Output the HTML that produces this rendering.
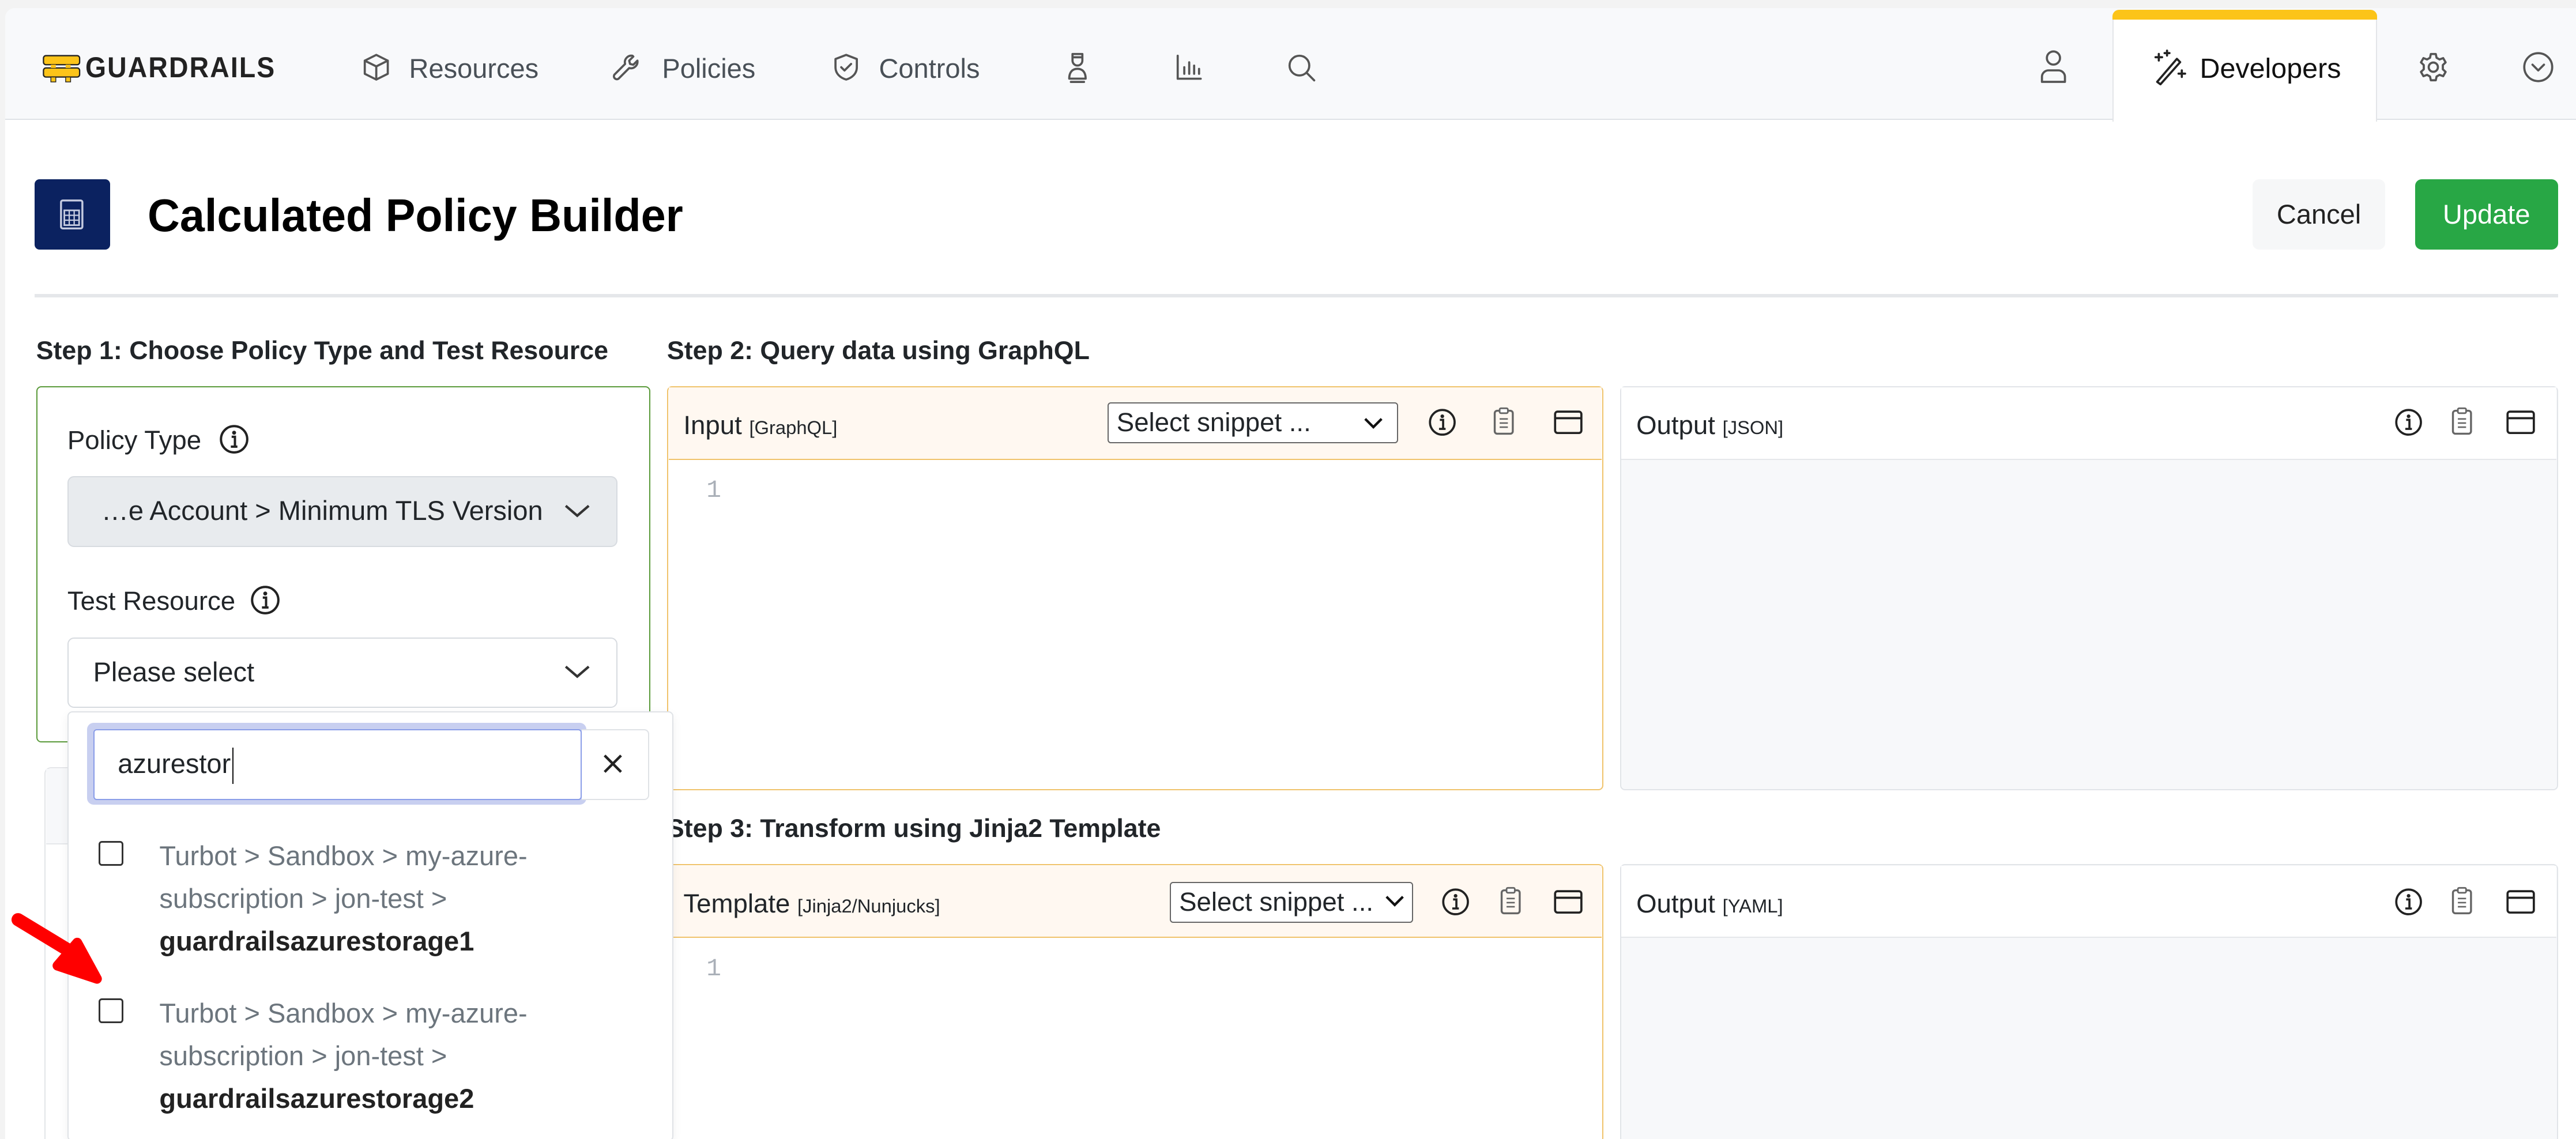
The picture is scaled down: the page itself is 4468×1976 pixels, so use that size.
<!DOCTYPE html>
<html><head><meta charset="utf-8"><style>
*{box-sizing:border-box;margin:0;padding:0}
html,body{width:4468px;height:1976px;overflow:hidden;background:#f3f3f3}
#r{zoom:2.8495;position:relative;width:1568px;height:694px;font-family:"Liberation Sans",sans-serif;color:#212529}
.a{position:absolute}
.page{left:3px;top:5px;width:1565px;height:690px;background:#fff;border-top-left-radius:6px}
.nav{left:3px;top:5px;width:1565px;height:68px;background:#f8f9fb;border-bottom:1px solid #dfe2e6;border-top-left-radius:6px}
.ni{font-size:16.5px;color:#495057;top:32px}
.ic{stroke:#555;fill:none;stroke-width:1.3;stroke-linecap:round;stroke-linejoin:round}
.lbl{font-size:16px;color:#212529}
.sel{border:1px solid #d7dbe0;border-radius:4px;font-size:16.5px}
.ph{border:1px solid #f0c36b;}
.hd{font-size:16px}
.hd small{font-size:11.5px}
.grey{color:#6c757d}
</style></head><body><div id="r">
<div class="a page"></div>
<div class="a nav"></div>
<svg class="a" style="left:26px;top:31px" width="24" height="20" viewBox="0 0 24 20"><rect x="0.5" y="3" width="22" height="5.5" rx="1.5" fill="#fcc419" stroke="#222" stroke-width="0.8"/><rect x="0.5" y="10.5" width="22" height="5.5" rx="1.5" fill="#fcc419" stroke="#222" stroke-width="0.8"/><rect x="5" y="8.5" width="3" height="2" fill="#fcc419"/><rect x="14" y="8.5" width="3" height="2" fill="#fcc419"/><rect x="5" y="16" width="3" height="3" fill="#fcc419" stroke="#222" stroke-width="0.5"/><rect x="14" y="16" width="3" height="3" fill="#fcc419" stroke="#222" stroke-width="0.5"/></svg>
<div class="a" style="left:52px;top:31px;font-size:17.5px;font-weight:bold;letter-spacing:0.8px;color:#222;transform:scaleX(0.93);transform-origin:left">GUARDRAILS</div>
<svg class="a" style="left:220px;top:32px" width="18" height="18" viewBox="0 0 18 18"><path class="ic" d="M9 1.5 16 5v8l-7 3.5L2 13V5zM2 5l7 3.5L16 5M9 8.5v8"/></svg>
<div class="a ni" style="left:249px">Resources</div>
<svg class="a" style="left:372px;top:32px" width="18" height="18" viewBox="0 0 18 18"><path class="ic" d="M13 2a4 4 0 0 0-4.5 5L2 13.5a1.8 1.8 0 0 0 2.5 2.5L11 9.5A4 4 0 0 0 16 5l-2.5 2.5-2-.5-.5-2L13.5 2.5z"/></svg>
<div class="a ni" style="left:403px">Policies</div>
<svg class="a" style="left:506px;top:32px" width="18" height="18" viewBox="0 0 18 18"><path class="ic" d="M9 1.5 15.5 4v5c0 4-3 6.5-6.5 7.5C5.5 15.5 2.5 13 2.5 9V4zM6 9l2 2 4-4"/></svg>
<div class="a ni" style="left:535px">Controls</div>
<svg class="a" style="left:648px;top:31px" width="16" height="20" viewBox="0 0 16 20"><path class="ic" d="M5 2h6v4a3 3 0 0 1-6 0zM5 4h6M3 17c0-4 2-6 5-6s5 2 5 6zM4 19h8"/></svg>
<svg class="a" style="left:715px;top:32px" width="18" height="18" viewBox="0 0 18 18"><path class="ic" d="M2 2v14h14M6 13V9M9 13V6M12 13V8M15 13V10"/></svg>
<svg class="a" style="left:783px;top:32px" width="19" height="19" viewBox="0 0 19 19"><circle class="ic" cx="8" cy="8" r="6"/><path class="ic" d="M12.5 12.5 17 17"/></svg>
<svg class="a" style="left:1241px;top:30px" width="18" height="22" viewBox="0 0 18 22"><circle class="ic" cx="9" cy="5.5" r="4"/><path class="ic" d="M2 20v-3a4 4 0 0 1 4-4h6a4 4 0 0 1 4 4v3z"/></svg>
<div class="a" style="left:1286px;top:11px;width:161px;height:63px;background:#fff;border-left:1px solid #e3e5e8;border-right:1px solid #e3e5e8"></div>
<div class="a" style="left:1286px;top:6px;width:161px;height:6px;background:#fcc419;border-radius:4px 4px 0 0"></div>
<svg class="a" style="left:1310px;top:30px" width="22" height="22" viewBox="0 0 22 22"><path class="ic" style="stroke:#222" d="M3 20 15 6l2 2L5 21.5zM4 3v4M2 5h4M9 1v3M7.5 2.5h3M18 13v4M16 15h4"/></svg>
<div class="a" style="left:1339px;top:32px;font-size:17px;color:#111">Developers</div>
<svg class="a" style="left:1471px;top:31px" width="20" height="20" viewBox="0 0 20 20"><circle class="ic" cx="10" cy="10" r="2.8"/><path class="ic" d="M8.5 2h3l.5 2.3 1.8 1 2.2-.8 1.5 2.6-1.7 1.6v2.6l1.7 1.6-1.5 2.6-2.2-.8-1.8 1-.5 2.3h-3l-.5-2.3-1.8-1-2.2.8-1.5-2.6 1.7-1.6V8.7L2.5 7.1 4 4.5l2.2.8 1.8-1z"/></svg>
<svg class="a" style="left:1535px;top:31px" width="20" height="20" viewBox="0 0 20 20"><circle class="ic" cx="10" cy="10" r="8.5"/><path class="ic" d="M6.5 8.5 10 12l3.5-3.5"/></svg>
<div class="a" style="left:21px;top:109px;width:46px;height:43px;background:#0b2260;border-radius:3px"></div>
<svg class="a" style="left:36px;top:121px" width="15" height="19" viewBox="0 0 15 19"><rect x="1" y="1" width="13" height="17" rx="1" fill="none" stroke="#c5cbe0" stroke-width="1.2"/><rect x="3" y="7" width="9" height="9" fill="none" stroke="#c5cbe0" stroke-width="1"/><path d="M6 7v9M9 7v9M3 10h9M3 13h9" stroke="#c5cbe0" stroke-width="0.8"/></svg>
<div class="a" style="left:90px;top:115px;font-size:28px;font-weight:bold;color:#000;transform:scaleX(0.97);transform-origin:left">Calculated Policy Builder</div>
<div class="a" style="left:1371px;top:109px;width:81px;height:43px;background:#f6f7f8;border-radius:4px;font-size:16.5px;text-align:center;line-height:43px;color:#222">Cancel</div>
<div class="a" style="left:1470px;top:109px;width:87px;height:43px;background:#28a745;border-radius:4px;font-size:16.5px;text-align:center;line-height:43px;color:#fff">Update</div>
<div class="a" style="left:21px;top:179px;width:1536px;height:2px;background:#e5e7ea"></div>
<div class="a" style="left:22px;top:205px;font-size:15.7px;font-weight:bold">Step 1: Choose Policy Type and Test Resource</div>
<div class="a" style="left:406px;top:205px;font-size:15.7px;font-weight:bold">Step 2: Query data using GraphQL</div>
<div class="a" style="left:406px;top:496px;font-size:15.7px;font-weight:bold">Step 3: Transform using Jinja2 Template</div>
<div class="a" style="left:22px;top:235px;width:374px;height:217px;border:1px solid #5a9a3a;border-radius:3px"></div>
<div class="a lbl" style="left:41px;top:259px">Policy Type</div>
<svg class="a" style="left:133px;top:258px" width="19" height="19" viewBox="0 0 19 19"><circle cx="9.5" cy="9.5" r="8" fill="none" stroke="#222" stroke-width="1.4"/><circle cx="9.5" cy="5.5" r="1.2" fill="#222"/><path d="M8 8h2v6M7.5 14h4" stroke="#222" stroke-width="1.4" fill="none"/></svg>
<div class="a sel" style="left:41px;top:290px;width:335px;height:43px;background:#e8ebee;line-height:41px;padding-left:20px">…e Account &gt; Minimum TLS Version</div>
<svg class="a" style="left:343px;top:305px" width="17" height="12" viewBox="0 0 17 12"><path d="M1.5 3l7 6 7-6" fill="none" stroke="#333" stroke-width="1.5"/></svg>
<div class="a lbl" style="left:41px;top:357px">Test Resource</div>
<svg class="a" style="left:152px;top:356px" width="19" height="19" viewBox="0 0 19 19"><circle cx="9.5" cy="9.5" r="8" fill="none" stroke="#222" stroke-width="1.4"/><circle cx="9.5" cy="5.5" r="1.2" fill="#222"/><path d="M8 8h2v6M7.5 14h4" stroke="#222" stroke-width="1.4" fill="none"/></svg>
<div class="a sel" style="left:41px;top:388px;width:335px;height:43px;background:#fff;line-height:41px;padding-left:15px">Please select</div>
<svg class="a" style="left:343px;top:403px" width="17" height="12" viewBox="0 0 17 12"><path d="M1.5 3l7 6 7-6" fill="none" stroke="#333" stroke-width="1.5"/></svg>
<div class="a" style="left:27px;top:467px;width:40px;height:227px;border:1px solid #e3e5e8;border-right:none;border-radius:4px 0 0 0;background:#fff"></div>
<div class="a" style="left:28px;top:468px;width:38px;height:46px;background:#f7f8fa;border-bottom:1px solid #e5e7ea"></div>
<div class="a ph" style="left:406px;top:235px;width:570px;height:246px;border-radius:3px"></div>
<div class="a" style="left:407px;top:236px;width:568px;height:44px;background:#fff8f1;border-bottom:1px solid #f0c36b"></div>
<div class="a hd" style="left:416px;top:250px">Input <small>[GraphQL]</small></div>
<div class="a" style="left:674px;top:245px;width:177px;height:25px;border:1px solid #666;border-radius:2px;background:#fff;font-size:16px;padding-left:5px;line-height:23px">Select snippet ...</div>
<svg class="a" style="left:830px;top:253px" width="12" height="9" viewBox="0 0 12 9"><path d="M1 2l5 5 5-5" fill="none" stroke="#111" stroke-width="1.5"/></svg>
<div class="a" style="left:986px;top:235px;width:571px;height:246px;border:1px solid #e1e4e8;border-radius:3px;background:#f7f8fa"></div>
<div class="a" style="left:987px;top:236px;width:569px;height:44px;background:#fff;border-bottom:1px solid #e5e7ea"></div>
<div class="a hd" style="left:996px;top:250px">Output <small>[JSON]</small></div>
<div class="a" style="left:430px;top:290px;font-size:15px;color:#aab0b8;font-family:'Liberation Mono',monospace">1</div>
<div class="a ph" style="left:406px;top:526px;width:570px;height:170px;border-radius:3px"></div>
<div class="a" style="left:407px;top:527px;width:568px;height:44px;background:#fff8f1;border-bottom:1px solid #f0c36b"></div>
<div class="a hd" style="left:416px;top:541px">Template <small>[Jinja2/Nunjucks]</small></div>
<div class="a" style="left:712px;top:537px;width:148px;height:25px;border:1px solid #666;border-radius:2px;background:#fff;font-size:16px;padding-left:5px;line-height:23px;overflow:hidden;white-space:nowrap">Select snippet ...</div>
<svg class="a" style="left:843px;top:544px" width="12" height="9" viewBox="0 0 12 9"><path d="M1 2l5 5 5-5" fill="none" stroke="#111" stroke-width="1.5"/></svg>
<div class="a" style="left:430px;top:581px;font-size:15px;color:#aab0b8;font-family:'Liberation Mono',monospace">1</div>
<div class="a" style="left:986px;top:526px;width:571px;height:170px;border:1px solid #e1e4e8;border-radius:3px;background:#f7f8fa"></div>
<div class="a" style="left:987px;top:527px;width:569px;height:44px;background:#fff;border-bottom:1px solid #e5e7ea"></div>
<div class="a hd" style="left:996px;top:541px">Output <small>[YAML]</small></div>
<svg width="0" height="0" style="position:absolute"><defs>
<g id="ii"><circle cx="9" cy="9" r="7.5" fill="none" stroke="#222" stroke-width="1.3"/><circle cx="9" cy="5.3" r="1.1" fill="#222"/><path d="M7.5 7.5h2v5.5M7 13h4" stroke="#222" stroke-width="1.3" fill="none"/></g>
<g id="cb"><rect x="3" y="3" width="11" height="14" rx="1.5" fill="none" stroke="#666" stroke-width="1.2"/><rect x="6" y="1.5" width="5" height="3" rx="0.8" fill="#fff" stroke="#666" stroke-width="1"/><path d="M6 8h5M6 10.5h5M6 13h5" stroke="#666" stroke-width="0.9"/></g>
<g id="pn"><rect x="1.5" y="2.5" width="16" height="13" rx="1.5" fill="none" stroke="#222" stroke-width="1.3"/><path d="M1.5 6.5h16" stroke="#222" stroke-width="1.3"/></g>
</defs></svg>
<svg class="a" style="left:869px;top:248px" width="18" height="18"><use href="#ii"/></svg>
<svg class="a" style="left:907px;top:247px" width="17" height="20"><use href="#cb"/></svg>
<svg class="a" style="left:945px;top:248px" width="19" height="18"><use href="#pn"/></svg>
<svg class="a" style="left:1457px;top:248px" width="18" height="18"><use href="#ii"/></svg>
<svg class="a" style="left:1490px;top:247px" width="17" height="20"><use href="#cb"/></svg>
<svg class="a" style="left:1525px;top:248px" width="19" height="18"><use href="#pn"/></svg>
<svg class="a" style="left:877px;top:540px" width="18" height="18"><use href="#ii"/></svg>
<svg class="a" style="left:911px;top:539px" width="17" height="20"><use href="#cb"/></svg>
<svg class="a" style="left:945px;top:540px" width="19" height="18"><use href="#pn"/></svg>
<svg class="a" style="left:1457px;top:540px" width="18" height="18"><use href="#ii"/></svg>
<svg class="a" style="left:1490px;top:539px" width="17" height="20"><use href="#cb"/></svg>
<svg class="a" style="left:1525px;top:540px" width="19" height="18"><use href="#pn"/></svg>
<div class="a" style="left:41px;top:433px;width:369px;height:262px;background:#fff;border:1px solid #dfe2e6;border-radius:3px;box-shadow:0 2px 6px rgba(0,0,0,.06)"></div>
<div class="a" style="left:53px;top:440px;width:304px;height:50px;border-radius:4px;background:#c8cff0"></div>
<div class="a" style="left:57px;top:444px;width:297px;height:43px;border:1px solid #8a9de8;border-radius:2px;background:#fff;font-size:16.5px;line-height:41px;padding-left:14px">azurestor<span style="border-left:1px solid #111;margin-left:1px;display:inline-block;height:22px;vertical-align:middle"></span></div>
<div class="a" style="left:354px;top:444px;width:41px;height:43px;border:1px solid #dfe2e6;border-left:none;border-radius:0 3px 3px 0;background:#fff"></div>
<svg class="a" style="left:366px;top:458px" width="14" height="14" viewBox="0 0 14 14"><path d="M2 2l10 10M12 2 2 12" stroke="#222" stroke-width="1.6"/></svg>
<div class="a" style="left:60px;top:512px;width:15px;height:15px;border:1.4px solid #333;border-radius:2px"></div>
<div class="a" style="left:97px;top:508px;font-size:16.5px;line-height:26px;width:280px"><span class="grey">Turbot &gt; Sandbox &gt; my-azure-<br>subscription &gt; jon-test &gt;</span><br><b style="color:#222">guardrailsazurestorage1</b></div>
<div class="a" style="left:60px;top:608px;width:15px;height:15px;border:1.4px solid #333;border-radius:2px"></div>
<div class="a" style="left:97px;top:604px;font-size:16.5px;line-height:26px;width:280px"><span class="grey">Turbot &gt; Sandbox &gt; my-azure-<br>subscription &gt; jon-test &gt;</span><br><b style="color:#222">guardrailsazurestorage2</b></div>
<svg class="a" style="left:0;top:550px" width="80" height="60" viewBox="0 0 80 60"><path d="M11 10 L44 30" stroke="#ff0000" stroke-width="8" stroke-linecap="round"/><path d="M35 38 L59 46 L47 24 Z" fill="#ff0000" stroke="#ff0000" stroke-width="6" stroke-linejoin="round"/></svg>
</div></body></html>
